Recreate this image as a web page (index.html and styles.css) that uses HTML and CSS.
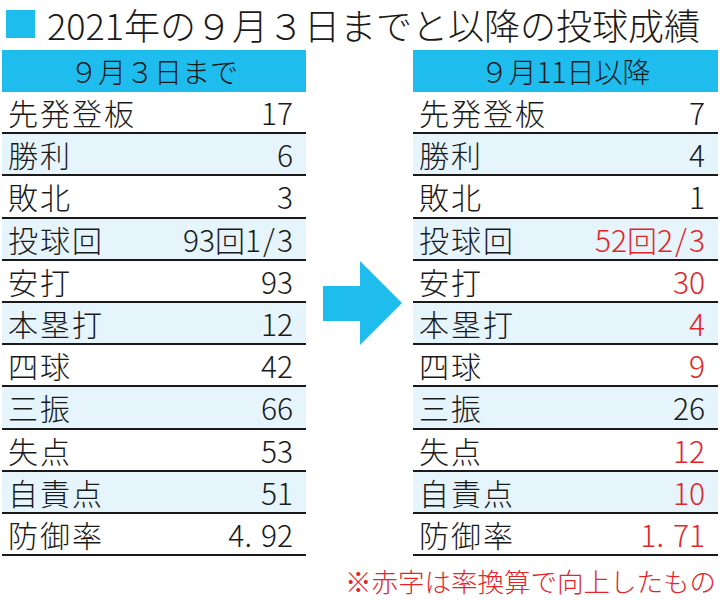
FILE: index.html
```html
<!DOCTYPE html>
<html lang="ja">
<head>
<meta charset="utf-8">
<link rel="stylesheet" href="styles.css">
</head>
<body>
<div class="title">
  <span class="sq"></span>
  <span class="ttext">2021年の９月３日までと以降の投球成績</span>
</div>
<div class="main">
  <div class="tbl left">
    <div class="head">９月３日まで</div>
    <div class="row"><span class="lab">先発登板</span><span class="num">17</span></div>
    <div class="row alt"><span class="lab">勝利</span><span class="num">6</span></div>
    <div class="row"><span class="lab">敗北</span><span class="num">3</span></div>
    <div class="row alt"><span class="lab">投球回</span><span class="num">93回1<span class="sl">/</span>3</span></div>
    <div class="row"><span class="lab">安打</span><span class="num">93</span></div>
    <div class="row alt"><span class="lab">本塁打</span><span class="num">12</span></div>
    <div class="row"><span class="lab">四球</span><span class="num">42</span></div>
    <div class="row alt"><span class="lab">三振</span><span class="num">66</span></div>
    <div class="row"><span class="lab">失点</span><span class="num">53</span></div>
    <div class="row alt"><span class="lab">自責点</span><span class="num">51</span></div>
    <div class="row"><span class="lab">防御率</span><span class="num">4<span class="pt">.</span>92</span></div>
  </div>
  <svg class="arrow" width="79" height="84" viewBox="0 0 79 84">
    <polygon points="0,25 37,25 37,0 79,42 37,84 37,60 0,60" fill="#1fbcee"/>
  </svg>
  <div class="tbl right">
    <div class="head">９月11日以降</div>
    <div class="row"><span class="lab">先発登板</span><span class="num">7</span></div>
    <div class="row alt"><span class="lab">勝利</span><span class="num">4</span></div>
    <div class="row"><span class="lab">敗北</span><span class="num">1</span></div>
    <div class="row alt"><span class="lab">投球回</span><span class="num red">52回2<span class="sl">/</span>3</span></div>
    <div class="row"><span class="lab">安打</span><span class="num red">30</span></div>
    <div class="row alt"><span class="lab">本塁打</span><span class="num red">4</span></div>
    <div class="row"><span class="lab">四球</span><span class="num red">9</span></div>
    <div class="row alt"><span class="lab">三振</span><span class="num">26</span></div>
    <div class="row"><span class="lab">失点</span><span class="num red">12</span></div>
    <div class="row alt"><span class="lab">自責点</span><span class="num red">10</span></div>
    <div class="row"><span class="lab">防御率</span><span class="num red">1<span class="pt">.</span>71</span></div>
  </div>
</div>
<div class="note">※赤字は率換算で向上したもの</div>
</body>
</html>
```

FILE: styles.css
```css
html, body {
  margin: 0;
  padding: 0;
  background: #ffffff;
}
body {
  width: 720px;
  font-family: "Noto Sans CJK JP", "Noto Sans", sans-serif;
  font-weight: 300;
  color: #1a1a1a;
}
.title {
  display: flex;
  align-items: center;
  height: 44px;
  padding-left: 6px;
  padding-top: 2px;
}
.sq {
  display: inline-block;
  width: 29px;
  height: 28px;
  background: #1fbcee;
  margin-right: 12px;
}
.ttext {
  font-size: 36px;
  line-height: 44px;
  white-space: nowrap;
}
.main {
  display: flex;
  align-items: center;
  padding-left: 2px;
  margin-top: 4px;
}
.tbl {
  display: flex;
  flex-direction: column;
}
.left {
  width: 304px;
}
.right {
  width: 305px;
}
.arrow {
  margin-left: 17px;
  margin-right: 11px;
  flex: none;
}
.head {
  height: 42px;
  background: #1fbcee;
  text-align: center;
  font-size: 28px;
  line-height: 42px;
}
.row {
  box-sizing: border-box;
  height: 42.2px;
  border-bottom: 2px solid #1a1a1a;
  display: flex;
  justify-content: space-between;
  align-items: center;
  padding: 0 13px 0 6px;
}
.alt {
  background: #e6f4fc;
}
.lab {
  font-size: 30px;
  letter-spacing: 2px;
  line-height: 40px;
}
.num {
  font-size: 30px;
  line-height: 40px;
}
.sl {
  margin: 0 2px;
}
.pt {
  margin-right: 9px;
}
.red {
  color: #e1252b;
}
.note {
  text-align: right;
  padding-right: 4px;
  margin-top: 8px;
  font-size: 26.5px;
  line-height: 34px;
  color: #e1252b;
}
```
